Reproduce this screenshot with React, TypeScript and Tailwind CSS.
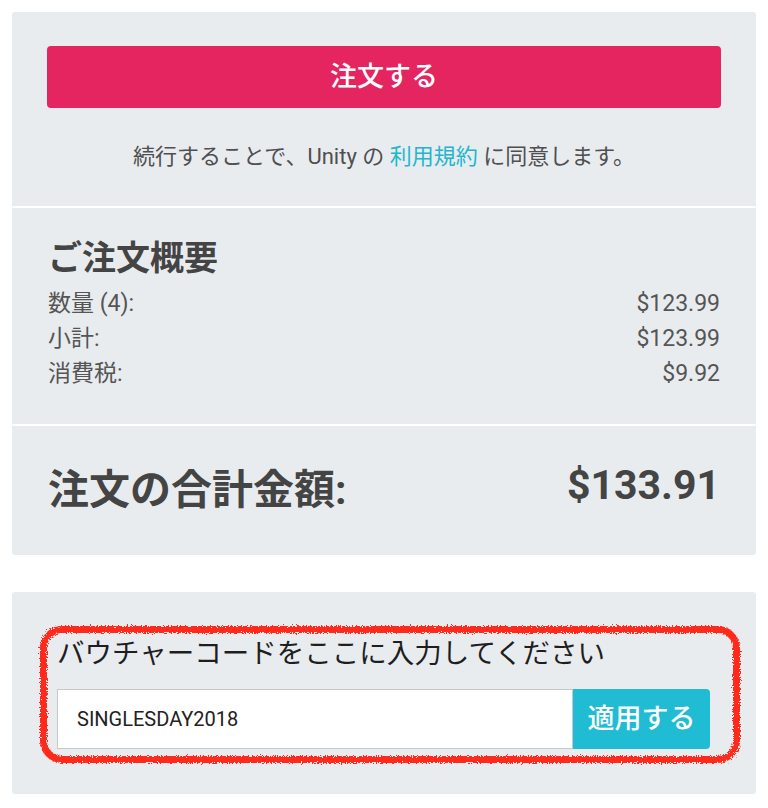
const jp = "font-['Roboto','Noto_Sans_CJK_JP',sans-serif]";

const rows = [
  { label: "数量 (4):", value: "$123.99" },
  { label: "小計:", value: "$123.99" },
  { label: "消費税:", value: "$9.92" },
];

export default function App() {
  return (
    <div className={`min-h-[808px] bg-white pt-[12px] pb-[13px] ${jp}`}>
      {/* filter for the hand-drawn marker border */}
      <svg width="0" height="0" className="absolute">
        <filter id="rough">
          <feTurbulence type="fractalNoise" baseFrequency="0.8" numOctaves="2" result="n" />
          <feDisplacementMap in="SourceGraphic" in2="n" scale="6" />
        </filter>
      </svg>

      <div className="mx-[12px] rounded-[3px] bg-[#e9ecef] text-[#4a4a4a]">
        <div className="border-b-2 border-white px-[35px] pt-[34px] pb-[34px]">
          <button className="flex h-[62px] w-full items-center justify-center rounded-[4px] bg-[#e5255f] text-[27px] font-medium text-white">
            注文する
          </button>
          <p className="mt-[34px] text-center text-[22px] leading-[30px] text-[#4f4f4f]">
            続行することで、Unity の <span className="text-[#22b6cc]">利用規約</span> に同意します。
          </p>
        </div>

        <div className="border-b-2 border-white px-[36px] pt-[30px] pb-[33px]">
          <h2 className="text-[34px] font-bold leading-[40px] text-[#444]">ご注文概要</h2>
          <div className="mt-[8px]">
            {rows.map((r) => (
              <div key={r.label} className="flex justify-between text-[23px] leading-[35px] text-[#555]">
                <span>{r.label}</span>
                <span>{r.value}</span>
              </div>
            ))}
          </div>
        </div>

        <div className="flex h-[129px] items-center justify-between px-[36px] text-[#444]">
          <span className="text-[41px] font-bold">注文の合計金額:</span>
          <span className="mb-[10px] text-[41px] font-bold">$133.91</span>
        </div>
      </div>

      <div className="mx-[12px] mt-[37px] h-[202px] rounded-[3px] bg-[#e9ecef] pt-[34px] pl-[28px] pr-[16px]">
        <div className="relative">
          <div className="pointer-events-none absolute inset-0 rounded-[22px] border-[7px] border-[#ff2b1c] [filter:url(#rough)]" />
          <div className="pt-[10px] pr-[28px] pb-[14px] pl-[17px]">
            <label className="block text-[27.5px] leading-[36px] text-[#1e1e1e]">
              バウチャーコードをここに入力してください
            </label>
            <div className="mt-[17px] flex h-[60px]">
              <div className="flex w-[516px] items-center border border-[#c8c8c8] bg-white pl-[19px] text-[20px] text-[#222]">
                SINGLESDAY2018
              </div>
              <button className="flex w-[137px] items-center justify-center rounded-r-[4px] bg-[#20bcd3] text-[27px] font-medium text-white">
                適用する
              </button>
            </div>
          </div>
        </div>
      </div>
    </div>
  );
}
